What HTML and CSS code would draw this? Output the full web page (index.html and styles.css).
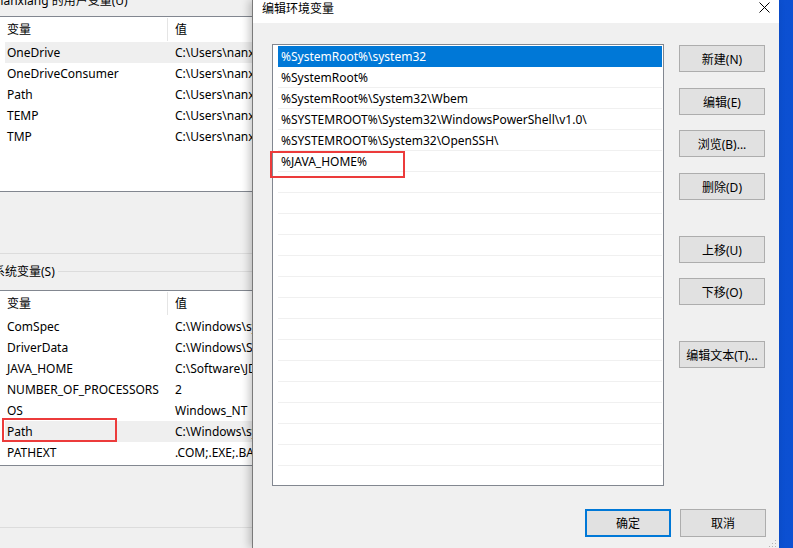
FILE: index.html
```html
<!DOCTYPE html>
<html lang="zh-CN">
<head>
    <meta charset="UTF-8">
    <title>编辑环境变量</title>
    <link rel="stylesheet" href="styles.css">
</head>
<body>
    <!-- 环境变量 (背景窗口) -->
    <div class="env-window">
        <div class="group-title">nanxiang 的用户变量(U)</div>

        <div class="var-list">
            <div class="var-head">
                <span class="col-name">变量</span>
                <span class="col-value">值</span>
            </div>
            <div class="var-row hover"><span class="col-name">OneDrive</span><span class="col-value">C:\Users\nanxiang</span></div>
            <div class="var-row"><span class="col-name">OneDriveConsumer</span><span class="col-value">C:\Users\nanxiang</span></div>
            <div class="var-row"><span class="col-name">Path</span><span class="col-value">C:\Users\nanxiang</span></div>
            <div class="var-row"><span class="col-name">TEMP</span><span class="col-value">C:\Users\nanxiang</span></div>
            <div class="var-row"><span class="col-name">TMP</span><span class="col-value">C:\Users\nanxiang</span></div>
        </div>

        <div class="divider"></div>

        <div class="group-label">
            <span>系统变量(S)</span>
            <span class="group-line"></span>
        </div>

        <div class="var-list">
            <div class="var-head">
                <span class="col-name">变量</span>
                <span class="col-value">值</span>
            </div>
            <div class="var-row"><span class="col-name">ComSpec</span><span class="col-value">C:\Windows\system32\cmd.exe</span></div>
            <div class="var-row"><span class="col-name">DriverData</span><span class="col-value">C:\Windows\System32\Drivers\DriverData</span></div>
            <div class="var-row"><span class="col-name">JAVA_HOME</span><span class="col-value">C:\Software\JDK\jdk1.8.0_201</span></div>
            <div class="var-row"><span class="col-name">NUMBER_OF_PROCESSORS</span><span class="col-value">2</span></div>
            <div class="var-row"><span class="col-name">OS</span><span class="col-value">Windows_NT</span></div>
            <div class="var-row hover"><span class="col-name">Path</span><span class="col-value">C:\Windows\system32;C:\Windows;C:\Windows\System32\Wbem;</span></div>
            <div class="var-row"><span class="col-name">PATHEXT</span><span class="col-value">.COM;.EXE;.BAT;.CMD;.VBS;.VBE;.JS;.JSE;.WSF;.WSH;.MSC</span></div>
        </div>

        <div class="divider"></div>

        <div class="mark mark-path"></div>
    </div>

    <!-- 编辑环境变量 对话框 -->
    <div class="dialog">
        <div class="title-bar">
            <span>编辑环境变量</span>
            <svg class="close-icon" width="11" height="11" viewBox="0 0 11 11">
                <path d="M0.5 0.5 L10.5 10.5 M10.5 0.5 L0.5 10.5" stroke="#000" stroke-width="1" fill="none"/>
            </svg>
        </div>

        <div class="dialog-body">
            <div class="dialog-main">
                <div class="path-list">
                    <div class="path-row selected">%SystemRoot%\system32</div>
                    <div class="path-row">%SystemRoot%</div>
                    <div class="path-row">%SystemRoot%\System32\Wbem</div>
                    <div class="path-row">%SYSTEMROOT%\System32\WindowsPowerShell\v1.0\</div>
                    <div class="path-row">%SYSTEMROOT%\System32\OpenSSH\</div>
                    <div class="path-row">%JAVA_HOME%</div>
                    <div class="path-row"></div>
                    <div class="path-row"></div>
                    <div class="path-row"></div>
                    <div class="path-row"></div>
                    <div class="path-row"></div>
                    <div class="path-row"></div>
                    <div class="path-row"></div>
                    <div class="path-row"></div>
                    <div class="path-row"></div>
                    <div class="path-row"></div>
                    <div class="path-row"></div>
                    <div class="path-row"></div>
                    <div class="path-row"></div>
                    <div class="path-row"></div>
                    <div class="path-row"></div>
                </div>

                <div class="side-buttons">
                    <button class="btn">新建(N)</button>
                    <button class="btn">编辑(E)</button>
                    <button class="btn">浏览(B)...</button>
                    <button class="btn">删除(D)</button>
                    <button class="btn gap-big">上移(U)</button>
                    <button class="btn">下移(O)</button>
                    <button class="btn gap-big">编辑文本(T)...</button>
                </div>
            </div>

            <div class="dialog-footer">
                <button class="btn btn-wide default">确定</button>
                <button class="btn btn-wide">取消</button>
            </div>
        </div>

        <div class="mark mark-java"></div>

        <svg class="size-grip" width="8" height="8" viewBox="0 0 8 8">
            <rect x="6" y="0" width="1" height="1" fill="#b4b4b4"/>
            <rect x="3" y="3" width="1" height="1" fill="#b4b4b4"/>
            <rect x="6" y="3" width="1" height="1" fill="#b4b4b4"/>
            <rect x="0" y="6" width="1" height="1" fill="#b4b4b4"/>
            <rect x="3" y="6" width="1" height="1" fill="#b4b4b4"/>
            <rect x="6" y="6" width="1" height="1" fill="#b4b4b4"/>
        </svg>
    </div>
</body>
</html>
```

FILE: styles.css
```css
* {
    box-sizing: border-box;
    margin: 0;
    padding: 0;
}

body {
    width: 793px;
    height: 548px;
    overflow: hidden;
    position: relative;
    font-family: "Noto Sans", "Noto Sans CJK SC", sans-serif;
    font-size: 12px;
    color: #000;
    background: linear-gradient(90deg, #0a3cb6, #0c50d2);
}

/* 背景窗口 */
.env-window {
    display: flow-root;
    position: relative;
    width: 779px;
    height: 548px;
    background-color: #f0f0f0;
}

.group-title {
    height: 23px;
    margin-top: -7px;
    margin-left: -4px;
    line-height: 16px;
    white-space: nowrap;
}

.var-list {
    height: 176px;
    background-color: #fff;
    border-top: 1px solid #828790;
    border-bottom: 1px solid #828790;
    overflow: hidden;
}

.var-head {
    display: flex;
    height: 25px;
    line-height: 25px;
}

.var-head .col-name {
    border-right: 1px solid #e5e5e5;
    margin: 1px 0;
    line-height: 23px;
}

.var-row {
    display: flex;
    height: 21px;
    padding-top: 1px;
    line-height: 20px;
    margin-left: 5px;
    white-space: nowrap;
}

.var-row.hover {
    background-color: #efefef;
}

.col-name {
    width: 168px;
    padding-left: 7px;
    flex-shrink: 0;
}

.var-row .col-name {
    width: 163px;
    padding-left: 2px;
}

.col-value {
    padding-left: 7px;
    white-space: nowrap;
}

.divider {
    height: 1px;
    margin-top: 61px;
    background-color: #dcdcdc;
}

.group-label {
    display: flex;
    align-items: center;
    height: 18px;
    margin-top: 8px;
    margin-bottom: 10px;
    margin-left: -7px;
    white-space: nowrap;
}

.group-line {
    flex: 1;
    height: 1px;
    margin-left: 3px;
    background-color: #dcdcdc;
}

/* 红色标注框 */
.mark {
    position: absolute;
    border: 2px solid #ec3b3b;
}

.mark-path {
    left: 2px;
    top: 418px;
    width: 115px;
    height: 24px;
}

.mark-java {
    left: 17px;
    top: 151px;
    width: 135px;
    height: 27px;
}

/* 对话框 */
.dialog {
    position: absolute;
    left: 252px;
    top: 0;
    width: 527px;
    height: 548px;
    background-color: #f0f0f0;
    border-left: 1px solid #7a7a7a;
    box-shadow: -3px 0 8px rgba(0, 0, 0, 0.22);
}

.title-bar {
    display: flex;
    justify-content: space-between;
    align-items: flex-start;
    height: 23px;
    padding: 0 9px 0 9px;
    background-color: #fff;
    line-height: 17px;
    font-size: 12px;
}

.close-icon {
    margin-top: 2px;
}

.dialog-body {
    padding: 21px 13px 0 19px;
}

.dialog-main {
    display: flex;
    gap: 15px;
}

.path-list {
    width: 392px;
    height: 442px;
    padding: 1px 1px 0 5px;
    background-color: #fff;
    border: 1px solid #828790;
    overflow: hidden;
}

.path-row {
    height: 21px;
    padding-top: 1px;
    line-height: 19px;
    padding-left: 3px;
    border-bottom: 1px solid #f0f0f0;
    white-space: nowrap;
}

.path-row.selected {
    background-color: #0078d7;
    border-bottom-color: #0078d7;
    color: #fff;
}

.side-buttons {
    display: flex;
    flex-direction: column;
    padding-top: 1px;
}

.btn {
    width: 86px;
    height: 27px;
    margin-bottom: 15px;
    background-color: #e1e1e1;
    border: 1px solid #adadad;
    font-family: inherit;
    font-size: 12px;
    color: #000;
}

.btn.gap-big {
    margin-top: 21px;
}

.side-buttons .btn:nth-child(1),
.side-buttons .btn:nth-child(3) {
    margin-bottom: 16px;
}

.dialog-footer {
    display: flex;
    justify-content: flex-end;
    gap: 9px;
    margin-top: 23px;
}

.btn-wide {
    height: 28px;
    margin-bottom: 0;
}

.btn.default {
    border: 2px solid #0078d7;
}

.size-grip {
    position: absolute;
    right: 2px;
    bottom: 0;
}
```
